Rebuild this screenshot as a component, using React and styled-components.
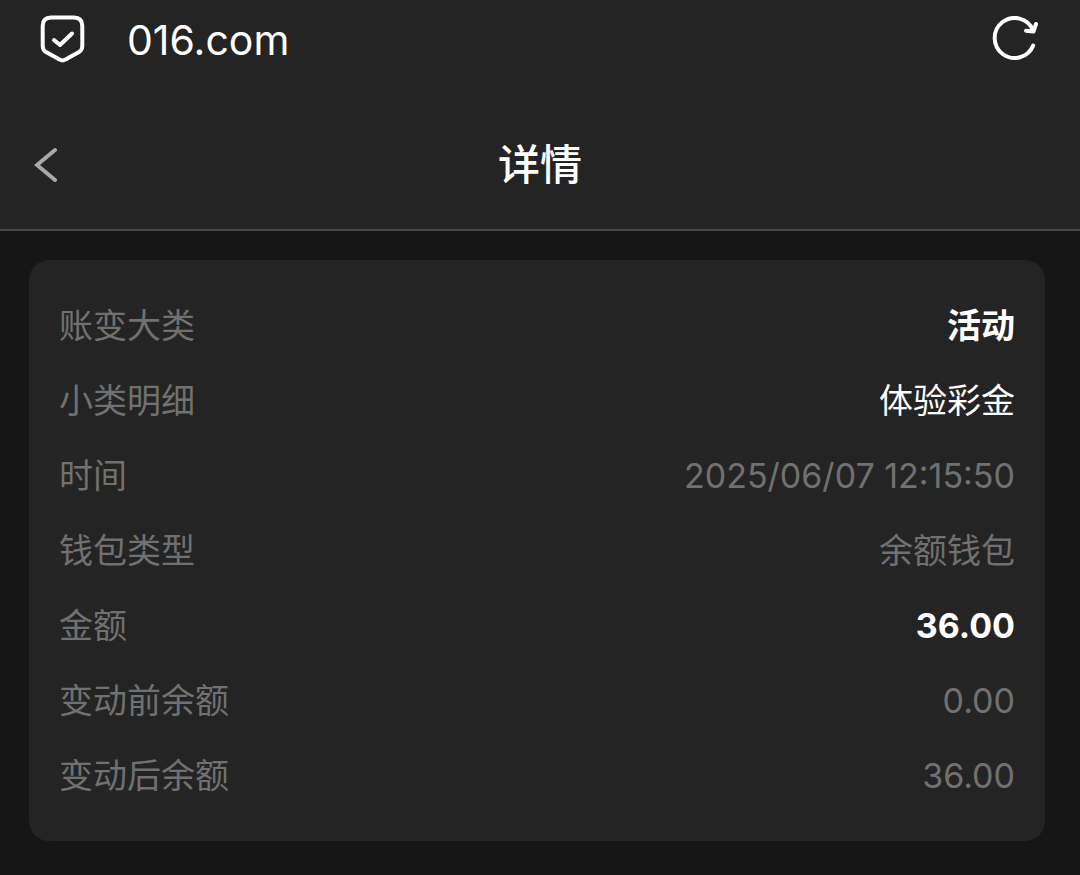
import React from 'react';
import styled, { createGlobalStyle } from 'styled-components';

const Global = createGlobalStyle`
  * { box-sizing: border-box; }
  body {
    margin: 0;
    background: #161616;
    color: #fff;
    font-family: Inter, "Noto Sans CJK SC", sans-serif;
  }
`;

const AddressBar = styled.header`
  display: flex;
  align-items: center;
  height: 80px;
  padding: 0 40px;
  background: #242424;
`;

const Address = styled.span`
  flex: 1;
  margin-left: 41px;
  font-size: 41px;
  line-height: 52px;
`;

const IconButton = styled.button`
  display: flex;
  padding: 0;
  border: 0;
  background: none;
  color: ${(p) => p.$color || '#fff'};
  cursor: pointer;
`;

const TitleBar = styled.nav`
  display: grid;
  grid-template-columns: 1fr auto 1fr;
  align-items: center;
  height: 151px;
  padding: 20px 34px 0;
  background: #242424;
  border-bottom: 2px solid #484848;
`;

const Title = styled.h1`
  margin: 0;
  font-size: 42px;
  line-height: 60px;
  font-weight: 500;
`;

const Card = styled.main`
  margin: 29px 35px 34px 29px;
  padding: 28px 30px;
  border-radius: 20px;
  background: #242424;
`;

const Details = styled.dl`
  margin: 0;
`;

const Row = styled.div`
  display: flex;
  justify-content: space-between;
  align-items: center;
  height: 75px;
  font-size: 34px;
  line-height: 48px;
`;

const Label = styled.dt`
  color: #717171;
`;

const Value = styled.dd`
  margin: 0;
  color: ${(p) => (p.$bright ? '#fff' : '#717171')};
  font-weight: ${(p) => (p.$bold ? 700 : 400)};
`;

const rows = [
  { label: '账变大类', value: '活动', bright: true, bold: true },
  { label: '小类明细', value: '体验彩金', bright: true },
  { label: '时间', value: '2025/06/07 12:15:50' },
  { label: '钱包类型', value: '余额钱包' },
  { label: '金额', value: '36.00', bright: true, bold: true },
  { label: '变动前余额', value: '0.00' },
  { label: '变动后余额', value: '36.00' },
];

export default function App() {
  return (
    <>
      <Global />
      <AddressBar>
        <svg width="46" height="50" viewBox="0 0 46 50" fill="none" stroke="#fff" strokeWidth="4" strokeLinejoin="round" strokeLinecap="round" aria-hidden="true">
          <path d="M11 2.5H34Q42.3 2.5 42.3 11V31Q42.3 35 39 37L25.5 44.6Q22.5 46.2 19.5 44.6L6 37Q2.7 35 2.7 31V11Q2.7 2.5 11 2.5Z" />
          <path d="M14 25L20 30L32 18.5" />
        </svg>
        <Address>016.com</Address>
        <IconButton aria-label="刷新">
          <svg width="48" height="48" viewBox="0 0 48 48" fill="none" stroke="#fff" strokeWidth="4" strokeLinecap="round" strokeLinejoin="round">
            <path d="M41.2 29.5A20 20 0 1 1 41 14" />
            <path d="M44 8L41.5 15.5L34 14.8" />
          </svg>
        </IconButton>
      </AddressBar>
      <TitleBar>
        <IconButton aria-label="返回" $color="#a8a8a8">
          <svg width="26" height="36" viewBox="0 0 26 36" fill="none" stroke="currentColor" strokeWidth="4" strokeLinecap="round">
            <path d="M21 3L3 18L21 33" />
          </svg>
        </IconButton>
        <Title>详情</Title>
      </TitleBar>
      <Card>
        <Details>
          {rows.map((r) => (
            <Row key={r.label}>
              <Label>{r.label}</Label>
              <Value $bright={r.bright} $bold={r.bold}>{r.value}</Value>
            </Row>
          ))}
        </Details>
      </Card>
    </>
  );
}
